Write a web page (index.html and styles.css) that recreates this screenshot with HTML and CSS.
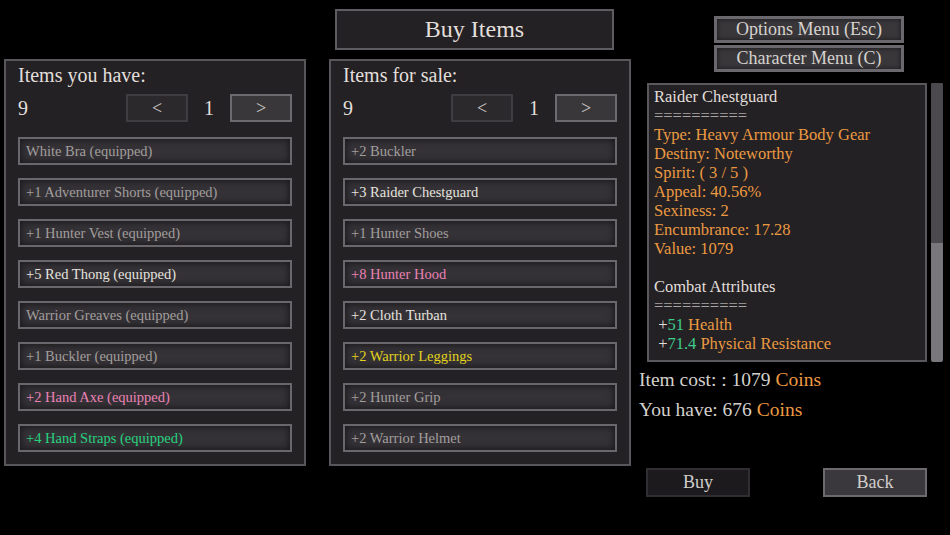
FILE: index.html
```html
<!DOCTYPE html>
<html lang="en">
<head>
  <meta charset="UTF-8" />
  <title>Buy Items</title>
  <link rel="stylesheet" href="styles.css">
</head>
<body>
  <div class="screen">

    <!-- inventory -->
    <div class="col col-left">
      <div class="panel">
        <div class="panel-title">Items you have:</div>
        <div class="pager">
          <span class="count">9</span>
          <button class="page-btn">&lt;</button>
          <span class="page-num">1</span>
          <button class="page-btn active">&gt;</button>
        </div>
        <ul class="item-list">
          <li class="item dim">White Bra (equipped)</li>
          <li class="item dim">+1 Adventurer Shorts (equipped)</li>
          <li class="item dim">+1 Hunter Vest (equipped)</li>
          <li class="item">+5 Red Thong (equipped)</li>
          <li class="item dim">Warrior Greaves (equipped)</li>
          <li class="item dim">+1 Buckler (equipped)</li>
          <li class="item pink">+2 Hand Axe (equipped)</li>
          <li class="item green">+4 Hand Straps (equipped)</li>
        </ul>
      </div>
    </div>

    <!-- shop stock -->
    <div class="col col-mid">
      <div class="screen-title">Buy Items</div>
      <div class="panel">
        <div class="panel-title">Items for sale:</div>
        <div class="pager">
          <span class="count">9</span>
          <button class="page-btn">&lt;</button>
          <span class="page-num">1</span>
          <button class="page-btn active">&gt;</button>
        </div>
        <ul class="item-list">
          <li class="item dim">+2 Buckler</li>
          <li class="item">+3 Raider Chestguard</li>
          <li class="item dim">+1 Hunter Shoes</li>
          <li class="item pink">+8 Hunter Hood</li>
          <li class="item">+2 Cloth Turban</li>
          <li class="item yellow">+2 Warrior Leggings</li>
          <li class="item dim">+2 Hunter Grip</li>
          <li class="item dim">+2 Warrior Helmet</li>
        </ul>
      </div>
    </div>

    <!-- selected item -->
    <div class="col col-right">
      <div class="menu-btns">
        <button class="menu-btn">Options Menu (Esc)</button>
        <button class="menu-btn">Character Menu (C)</button>
      </div>

      <div class="details-wrap">
        <div class="details">
          <div>Raider Chestguard</div>
          <div class="rule">==========</div>
          <div class="orange">Type: Heavy Armour Body Gear</div>
          <div class="orange">Destiny: Noteworthy</div>
          <div class="orange">Spirit: ( 3 / 5 )</div>
          <div class="orange">Appeal: 40.56%</div>
          <div class="orange">Sexiness: 2</div>
          <div class="orange">Encumbrance: 17.28</div>
          <div class="orange">Value: 1079</div>
          <div>&nbsp;</div>
          <div>Combat Attributes</div>
          <div class="rule">==========</div>
          <div>&nbsp;+<span class="num">51</span> <span class="orange">Health</span></div>
          <div>&nbsp;+<span class="num">71.4</span> <span class="orange">Physical Resistance</span></div>
        </div>
        <div class="scrollbar">
          <div class="scroll-thumb"></div>
        </div>
      </div>

      <div class="prices">
        <div class="price">Item cost: : 1079 <span class="orange">Coins</span></div>
        <div class="price">You have: 676 <span class="orange">Coins</span></div>
      </div>

      <div class="actions">
        <button class="act-btn buy">Buy</button>
        <button class="act-btn back">Back</button>
      </div>
    </div>

  </div>
</body>
</html>
```

FILE: styles.css
```css
html, body {
  margin: 0;
  background: #000;
}
body {
  font-family: "Liberation Serif", "Times New Roman", serif;
  color: #e2dfdb;
}
button {
  font-family: inherit;
  cursor: pointer;
}
.screen {
  display: flex;
  width: 950px;
  height: 535px;
  padding-left: 4px;
  box-sizing: border-box;
}
.col {
  display: flex;
  flex-direction: column;
}
.col-left {
  width: 302px;
  padding-top: 59px;
}
.col-mid {
  width: 302px;
  margin-left: 23px;
  padding-top: 9px;
}
.col-right {
  margin-left: 8px;
  width: 311px;
  padding-top: 16px;
}

/* list panels */
.panel {
  background: #232124;
  border: 2px solid #58565a;
  height: 407px;
  box-sizing: border-box;
  padding: 1px 12px 0 12px;
}
.panel-title {
  font-size: 20px;
  line-height: 26px;
}
.pager {
  display: flex;
  align-items: center;
  margin-top: 6px;
  height: 28px;
}
.count {
  font-size: 20px;
  flex: 1;
}
.page-btn {
  width: 62px;
  height: 28px;
  background: #2b292c;
  border: 2px solid #3f3d41;
  color: #cfcbc7;
  font-size: 18px;
  padding: 0;
}
.page-btn.active {
  background: #39373a;
  border-color: #6c6a6e;
}
.page-num {
  width: 42px;
  text-align: center;
  font-size: 20px;
}
.item-list {
  list-style: none;
  margin: 15px 0 0 0;
  padding: 0;
  display: flex;
  flex-direction: column;
  gap: 13px;
}
.item {
  height: 28px;
  box-sizing: border-box;
  border: 2px solid #69676b;
  background: #353237;
  box-shadow: inset 0 0 7px 1px rgba(0, 0, 0, 0.55);
  font-size: 14.5px;
  line-height: 24px;
  padding-left: 6px;
  color: #e6e3df;
}
.item.dim { color: #a29e9c; }
.item.pink { color: #ea82b4; }
.item.green { color: #26d27e; }
.item.yellow { color: #e2d21c; }

.screen-title {
  align-self: center;
  margin-left: -11px;
  width: 279px;
  height: 41px;
  box-sizing: border-box;
  border: 2px solid #5e5c60;
  background: #232124;
  text-align: center;
  font-size: 24px;
  line-height: 37px;
  margin-bottom: 9px;
}

/* right side */
.menu-btns {
  display: flex;
  flex-direction: column;
  gap: 2px;
  margin-left: 75px;
  width: 190px;
}
.menu-btn {
  height: 27px;
  background: #39373a;
  border: 3px solid #6a686c;
  box-shadow: inset 0 0 5px rgba(0, 0, 0, 0.6);
  color: #d6d2ce;
  font-size: 18px;
  line-height: 19px;
  padding: 0;
}
.details-wrap {
  display: flex;
  margin-top: 11px;
  margin-left: 8px;
  height: 279px;
}
.details {
  width: 280px;
  box-sizing: border-box;
  border: 2px solid #5a585c;
  background: #232124;
  padding: 2px 5px;
  font-size: 16.5px;
  line-height: 19px;
}
.rule { color: #a8a4a2; }
.orange { color: #ec9a42; }
.num { color: #3fcb8c; }
.scrollbar {
  margin-left: 4px;
  width: 12px;
  background: #79777b;
  border-radius: 2px;
  overflow: hidden;
}
.scroll-thumb {
  height: 160px;
  background: #4b494d;
}
.prices {
  margin-top: 3px;
}
.price {
  font-size: 19.5px;
  line-height: 30px;
  color: #d4d0cc;
}
.actions {
  display: flex;
  justify-content: space-between;
  margin-top: 43px;
  margin-left: 7px;
  width: 281px;
}
.act-btn {
  width: 104px;
  height: 29px;
  font-size: 18px;
  padding: 0;
  color: #d2cecb;
}
.act-btn.buy {
  background: #1c1a1d;
  border: 2px solid #302e32;
}
.act-btn.back {
  background: #3a383c;
  border: 2px solid #6c6a6e;
}
```
